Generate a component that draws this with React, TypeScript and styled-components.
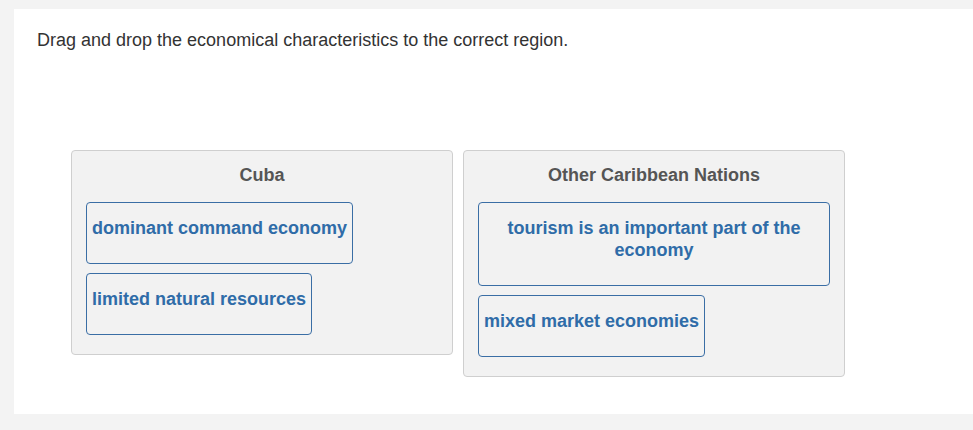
import React from "react";
import styled, { createGlobalStyle } from "styled-components";

const Global = createGlobalStyle`
  html, body { margin: 0; padding: 0; background: #f3f3f3; }
  body { font-family: "Liberation Sans", Arial, sans-serif; overflow: hidden; }
`;

const Card = styled.div`
  margin: 9px 0 0 14px;
  height: 405px;
  background: #ffffff;
  padding: 20px 0 0 23px;
  box-sizing: border-box;
`;

const Instruction = styled.div`
  font-size: 18px;
  line-height: 22px;
  color: #333333;
`;

const Zones = styled.div`
  display: flex;
  align-items: flex-start;
  gap: 10px;
  margin: 99px 0 0 34px;
`;

const Zone = styled.div`
  width: 382px;
  box-sizing: border-box;
  background: #f2f2f2;
  border: 1px solid #cfcfcf;
  border-radius: 4px;
  padding: 13px 14px 9px;
`;

const ZoneTitle = styled.div`
  text-align: center;
  font-weight: bold;
  font-size: 18px;
  line-height: 22px;
  color: #555555;
  margin-bottom: 16px;
`;

const Items = styled.div`
  display: flex;
  flex-direction: column;
  align-items: flex-start;
  gap: 9px;
  padding-bottom: 10px;
`;

const Item = styled.div`
  box-sizing: border-box;
  border: 1px solid #3a6ea5;
  border-radius: 4px;
  padding: 14px 5px 24px;
  font-weight: bold;
  font-size: 18px;
  line-height: 22px;
  color: #2f6ca8;
  text-align: center;
  max-width: 100%;
`;

const zones = [
  { title: "Cuba", items: ["dominant command economy", "limited natural resources"] },
  {
    title: "Other Caribbean Nations",
    items: ["tourism is an important part of the economy", "mixed market economies"],
  },
];

export default function App() {
  return (
    <>
      <Global />
      <Card>
        <Instruction>Drag and drop the economical characteristics to the correct region.</Instruction>
        <Zones>
          {zones.map((z) => (
            <Zone key={z.title}>
              <ZoneTitle>{z.title}</ZoneTitle>
              <Items>
                {z.items.map((it) => (
                  <Item key={it}>{it}</Item>
                ))}
              </Items>
            </Zone>
          ))}
        </Zones>
      </Card>
    </>
  );
}
